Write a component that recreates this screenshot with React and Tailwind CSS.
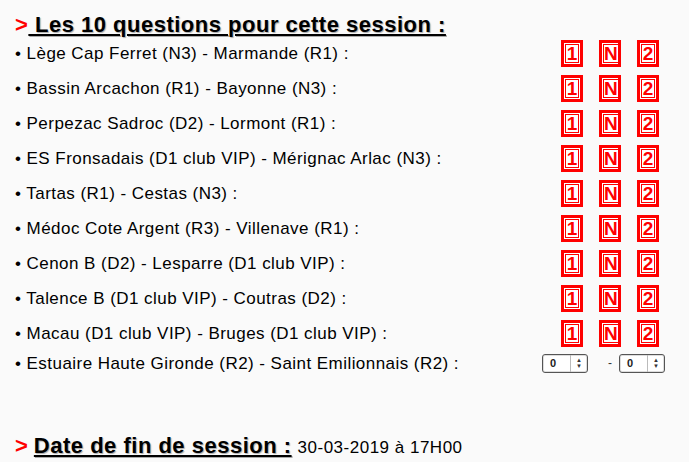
const MATCHES = [
  "Lège Cap Ferret (N3) - Marmande (R1) :",
  "Bassin Arcachon (R1) - Bayonne (N3) :",
  "Perpezac Sadroc (D2) - Lormont (R1) :",
  "ES Fronsadais (D1 club VIP) - Mérignac Arlac (N3) :",
  "Tartas (R1) - Cestas (N3) :",
  "Médoc Cote Argent (R3) - Villenave (R1) :",
  "Cenon B (D2) - Lesparre (D1 club VIP) :",
  "Talence B (D1 club VIP) - Coutras (D2) :",
  "Macau (D1 club VIP) - Bruges (D1 club VIP) :",
];

function Pick({ label }) {
  return (
    <span className="flex h-[27px] w-[22px] border-[3px] border-[#ff0000] bg-white p-px">
      <span className="flex flex-1 items-center justify-center border border-[#ff0000] bg-white text-[19px] leading-none font-bold text-[#ff0000]">
        {label}
      </span>
    </span>
  );
}

function ScoreSelect() {
  return (
    <span className="flex h-[19px] w-[46px] items-center rounded-[3px] border border-[#555] bg-white shadow-[inset_0_0_0_1px_#ddd]">
      <span className="flex-1 pl-[7px] text-[11px] leading-none font-bold text-[#222]">0</span>
      <span className="flex h-full w-[17px] flex-col items-center justify-center border-l border-[#bbb] text-[6px] leading-[6px] text-[#333]">
        <span>▲</span>
        <span>▼</span>
      </span>
    </span>
  );
}

export default function App() {
  return (
    <main className="h-[462px] w-[689px] overflow-hidden bg-[#fafafa] font-['Liberation_Sans',Arial,sans-serif] text-black">
      <h2 className="flex h-[36px] items-end pl-[15px] text-[22px] leading-none font-bold tracking-[0.5px]">
        <span className="text-[#ff0000]">&gt;</span>
        <span className="underline decoration-[2px] underline-offset-[2px] [text-shadow:1px_1px_1px_#aaa]">
          &nbsp;Les 10 questions pour cette session :
        </span>
      </h2>

      <div className="flex flex-col">
        {MATCHES.map((match) => (
          <div key={match} className="flex h-[35px] items-center pr-[30px] pl-[15px]">
            <span className="flex-1 text-[17px] leading-none tracking-[0.45px]">• {match}</span>
            <span className="flex gap-4">
              <Pick label="1" />
              <Pick label="N" />
              <Pick label="2" />
            </span>
          </div>
        ))}
        <div className="flex h-[24px] items-center pr-[24px] pl-[15px]">
          <span className="flex-1 text-[17px] leading-none tracking-[0.45px]">
            • Estuaire Haute Gironde (R2) - Saint Emilionnais (R2) :
          </span>
          <span className="flex items-center">
            <ScoreSelect />
            <span className="ml-[20px] mr-[7px] text-[12px] text-[#333]">-</span>
            <ScoreSelect />
          </span>
        </div>
      </div>

      <p className="mt-[54px] flex items-baseline pl-[15px]">
        <span className="text-[22px] font-bold text-[#ff0000]">&gt;</span>
        <span className="ml-[6px] text-[22px] font-bold tracking-[0.5px] underline decoration-[2px] underline-offset-[2px] [text-shadow:1px_1px_1px_#aaa]">
          Date de fin de session :
        </span>
        <span className="ml-[6px] text-[17px] tracking-[0.5px]">30-03-2019 à 17H00</span>
      </p>
    </main>
  );
}
